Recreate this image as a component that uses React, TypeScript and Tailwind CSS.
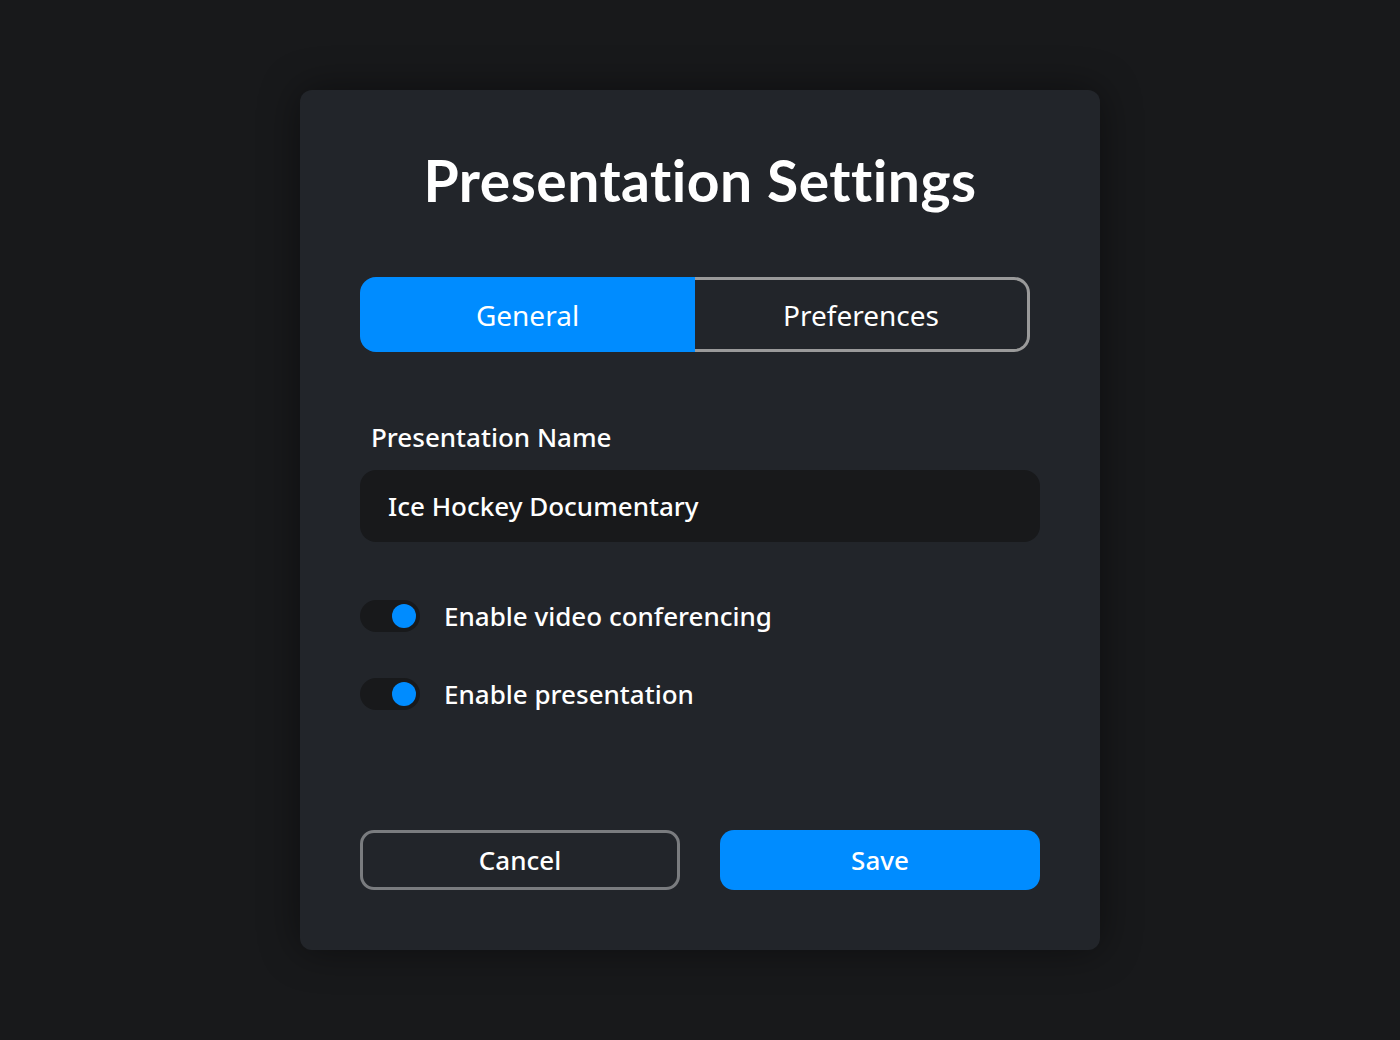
import { useState } from "react";

const body = { fontFamily: '"Noto Sans", "Open Sans", sans-serif' };

function Toggle({ on, onChange, label }: { on: boolean; onChange: () => void; label: string }) {
  return (
    <button type="button" onClick={onChange} className="flex items-center gap-[24px] text-left">
      <span className="relative w-[60px] h-[32px] rounded-full bg-[#18191b] shrink-0">
        <span
          className={`absolute top-[4px] w-[24px] h-[24px] rounded-full ${on ? "left-[32px] bg-[#008cff]" : "left-[4px] bg-[#6b6e73]"}`}
        />
      </span>
      <span className="text-[26px] font-medium text-white leading-none">{label}</span>
    </button>
  );
}

export default function App() {
  const [tab, setTab] = useState<"general" | "prefs">("general");
  const [name, setName] = useState("Ice Hockey Documentary");
  const [video, setVideo] = useState(true);
  const [present, setPresent] = useState(true);

  return (
    <div className="min-h-[1040px] w-full bg-[#18191b] flex justify-center pt-[90px]" style={body}>
      <div className="w-[800px] h-[860px] bg-[#22252a] rounded-[12px] shadow-[0_0_40px_rgba(0,0,0,0.45)] px-[60px] pt-[62px] pb-[60px] flex flex-col">
        <h1
          className="text-center text-white text-[57px] font-bold leading-none tracking-[0.5px]"
          style={{ fontFamily: '"Lato", "Noto Sans", sans-serif' }}
        >
          Presentation Settings
        </h1>

        {/* Tabs */}
        <div className="mt-[68px] flex w-[670px] h-[75px]">
          <button
            type="button"
            onClick={() => setTab("general")}
            className={`w-[335px] rounded-l-[16px] text-[28px] text-white ${tab === "general" ? "bg-[#008cff]" : "border-[3px] border-r-0 border-[#9a9a9a]"}`}
          >
            General
          </button>
          <button
            type="button"
            onClick={() => setTab("prefs")}
            className={`flex-1 rounded-r-[16px] text-[28px] text-white ${tab === "prefs" ? "bg-[#008cff]" : "border-[3px] border-l-0 border-[#9a9a9a]"}`}
          >
            Preferences
          </button>
        </div>

        {/* Name field */}
        <label className="mt-[72px] ml-[11px] text-[26px] font-medium text-white leading-none">
          Presentation Name
        </label>
        <input
          value={name}
          onChange={e => setName(e.target.value)}
          className="mt-[20px] h-[72px] w-full rounded-[16px] bg-[#18191b] px-[28px] text-[26px] font-medium text-white outline-none"
        />

        {/* Toggles */}
        <div className="mt-[58px] flex flex-col gap-[46px]">
          <Toggle on={video} onChange={() => setVideo(!video)} label="Enable video conferencing" />
          <Toggle on={present} onChange={() => setPresent(!present)} label="Enable presentation" />
        </div>

        {/* Actions */}
        <div className="mt-auto flex justify-between">
          <button
            type="button"
            className="w-[320px] h-[60px] rounded-[14px] border-[3px] border-[#7a7c7f] text-[26px] font-medium text-white"
          >
            Cancel
          </button>
          <button
            type="button"
            className="w-[320px] h-[60px] rounded-[14px] bg-[#008cff] text-[26px] font-medium text-white"
          >
            Save
          </button>
        </div>
      </div>
    </div>
  );
}
